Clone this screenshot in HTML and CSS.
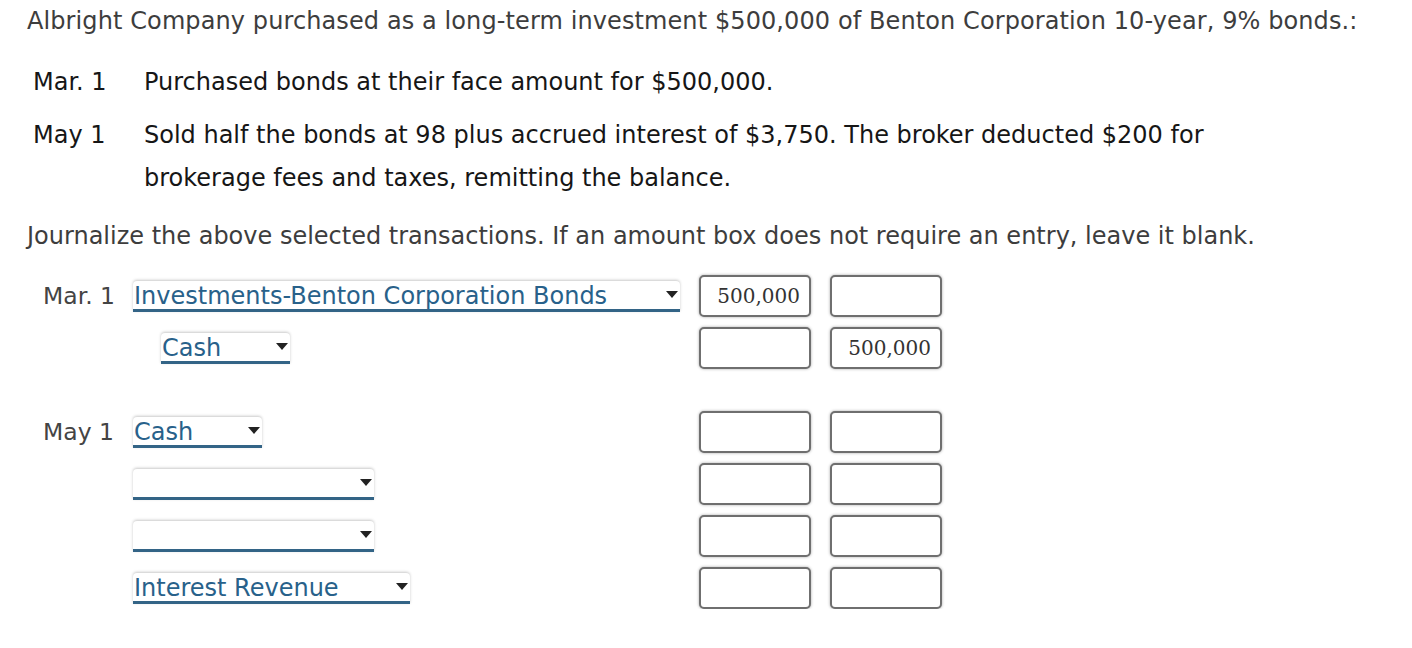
FILE: index.html
```html
<!DOCTYPE html>
<html>
<head>
<meta charset="utf-8">
<link rel="stylesheet" href="styles.css">
</head>
<body>
<div class="page">
  <p class="intro">Albright Company purchased as a long-term investment $500,000 of Benton Corporation 10-year, 9% bonds.:</p>
  <div class="txn">
    <span class="txn-date">Mar. 1</span>
    <span class="txn-desc">Purchased bonds at their face amount for $500,000.</span>
  </div>
  <div class="txn">
    <span class="txn-date">May 1</span>
    <span class="txn-desc">Sold half the bonds at 98 plus accrued interest of $3,750. The broker deducted $200 for brokerage fees and taxes, remitting the balance.</span>
  </div>
  <p class="instr">Journalize the above selected transactions. If an amount box does not require an entry, leave it blank.</p>

  <div class="journal">
    <div class="entry">
      <div class="row">
        <span class="date">Mar. 1</span>
        <div class="acct"><div class="select w-inv"><span class="sel-text">Investments-Benton Corporation Bonds</span><span class="caret"></span></div></div>
        <div class="amt">500,000</div>
        <div class="amt"></div>
      </div>
      <div class="row">
        <span class="date"></span>
        <div class="acct indent"><div class="select w-cash"><span class="sel-text">Cash</span><span class="caret"></span></div></div>
        <div class="amt"></div>
        <div class="amt">500,000</div>
      </div>
    </div>

    <div class="entry">
      <div class="row">
        <span class="date">May 1</span>
        <div class="acct"><div class="select w-cash"><span class="sel-text">Cash</span><span class="caret"></span></div></div>
        <div class="amt"></div>
        <div class="amt"></div>
      </div>
      <div class="row">
        <span class="date"></span>
        <div class="acct"><div class="select w-blank"><span class="sel-text"></span><span class="caret"></span></div></div>
        <div class="amt"></div>
        <div class="amt"></div>
      </div>
      <div class="row">
        <span class="date"></span>
        <div class="acct"><div class="select w-blank"><span class="sel-text"></span><span class="caret"></span></div></div>
        <div class="amt"></div>
        <div class="amt"></div>
      </div>
      <div class="row">
        <span class="date"></span>
        <div class="acct"><div class="select w-int"><span class="sel-text">Interest Revenue</span><span class="caret"></span></div></div>
        <div class="amt"></div>
        <div class="amt"></div>
      </div>
    </div>
  </div>
</div>
</body>
</html>
```

FILE: styles.css
```css
html, body {
  margin: 0;
  padding: 0;
  background: #ffffff;
}

.page {
  font-family: "DejaVu Sans", Verdana, sans-serif;
  padding: 0 0 0 27px;
}

.intro {
  margin: 0;
  padding-top: 6px;
  font-size: 24px;
  letter-spacing: 0.1px;
  line-height: 30px;
  color: #3d3d3d;
  white-space: nowrap;
}

.txn {
  display: flex;
  margin-top: 25px;
  font-size: 24px;
  line-height: 43px;
  color: #161616;
}

.txn + .txn {
  margin-top: 10px;
}

.txn-date {
  flex: 0 0 117px;
  padding-left: 6px;
  box-sizing: border-box;
}

.txn-desc {
  flex: 0 0 1150px;
}

.instr {
  margin: 21px 0 0 0;
  font-size: 24px;
  line-height: 30px;
  color: #3d3d3d;
  white-space: nowrap;
}

.journal {
  margin-top: 24px;
  padding-left: 16px;
  display: flex;
  flex-direction: column;
  gap: 42px;
}

.entry {
  display: flex;
  flex-direction: column;
  gap: 10px;
}

.row {
  display: grid;
  grid-template-columns: 90px 566px 112px 131px;
  align-items: center;
  height: 42px;
}

.row .amt + .amt {
  margin-left: 19px;
}

.date {
  font-size: 23.5px;
  color: #444444;
  line-height: 42px;
  white-space: nowrap;
}

.acct {
  display: flex;
  align-items: center;
}

.acct.indent {
  padding-left: 28px;
}

.select {
  position: relative;
  height: 28px;
  background: #ffffff;
  border-bottom: 3px solid #336486;
  border-radius: 4px 4px 0 0;
  box-shadow: 0 -1px 3px rgba(0, 0, 0, 0.22);
  display: flex;
  align-items: center;
  box-sizing: content-box;
}

.sel-text {
  font-size: 24px;
  color: #28618a;
  padding-left: 1px;
  padding-top: 2px;
  white-space: nowrap;
  line-height: 28px;
}

.caret {
  position: absolute;
  right: 2px;
  top: 10px;
  width: 0;
  height: 0;
  border-left: 6px solid transparent;
  border-right: 6px solid transparent;
  border-top: 7px solid #222222;
}

.w-inv { width: 547px; }
.w-cash { width: 129px; }
.w-blank { width: 241px; }
.w-int { width: 277px; }

.amt {
  width: 112px;
  height: 42px;
  box-sizing: border-box;
  border: 2px solid #6f6f6f;
  border-radius: 5px;
  box-shadow: 0 0 3px rgba(0, 0, 0, 0.35);
  background: #ffffff;
  font-family: "DejaVu Serif", "Liberation Serif", serif;
  font-size: 20px;
  color: #333333;
  text-align: right;
  padding-right: 9px;
  line-height: 38px;
}
```
